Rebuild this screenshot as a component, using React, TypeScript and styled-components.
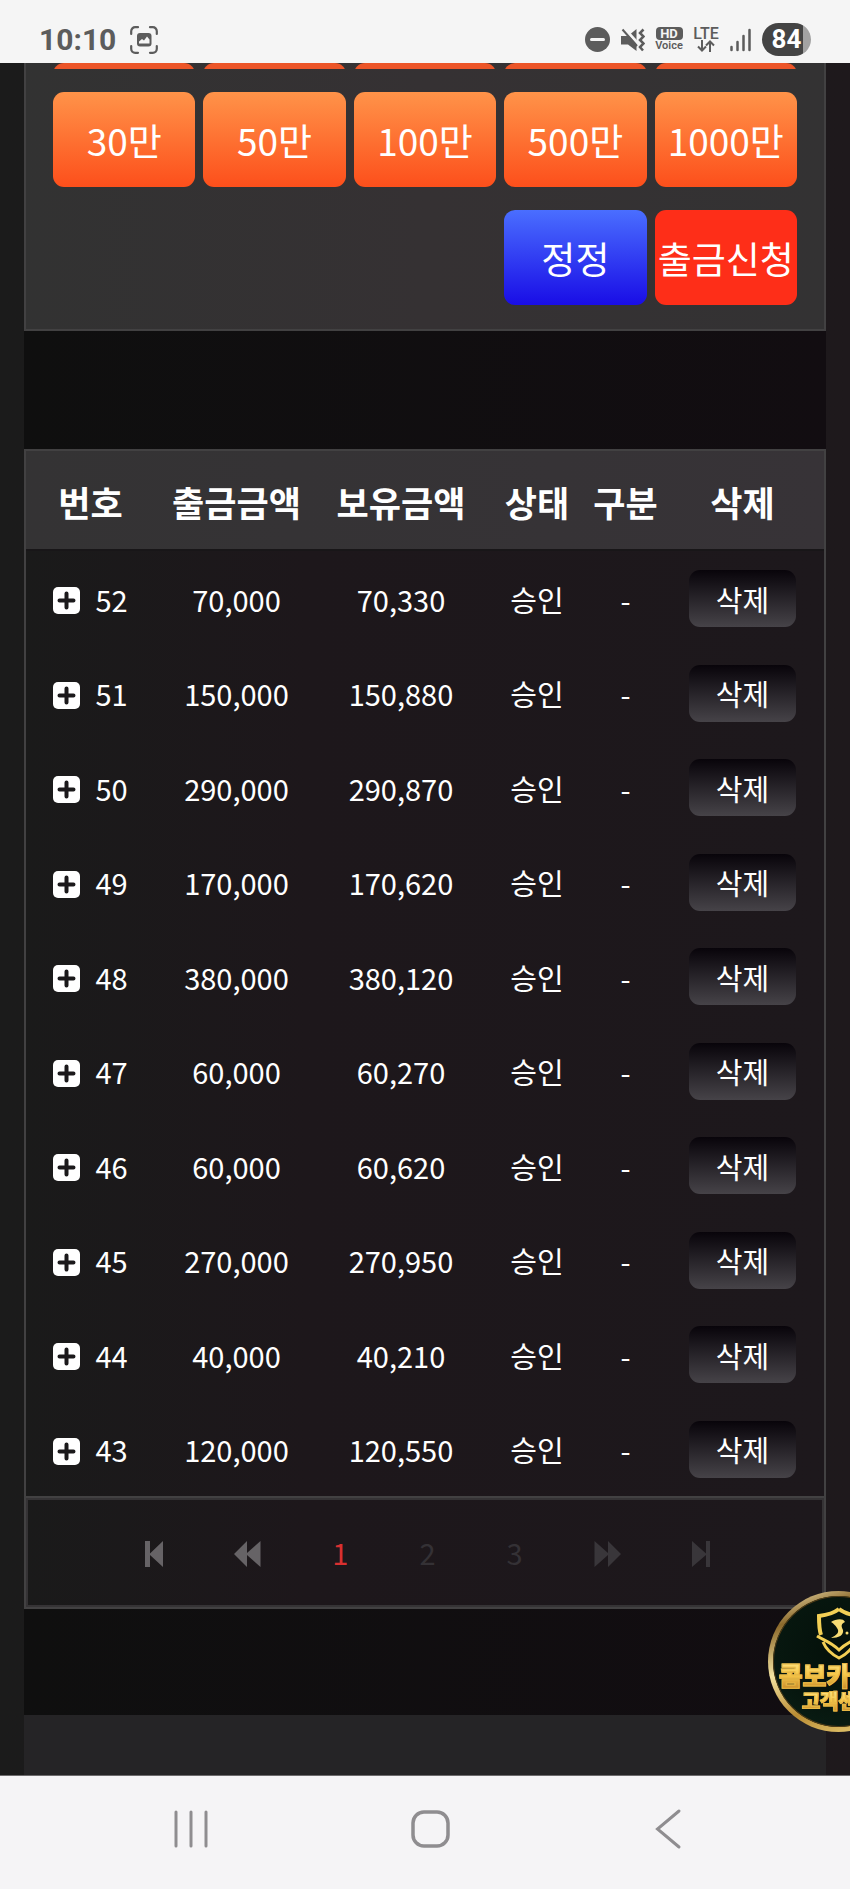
import styled, { createGlobalStyle } from 'styled-components';

const GlobalStyle = createGlobalStyle`
  * {
    box-sizing: border-box;
  }

  body {
    margin: 0;
    background-color: #f5f4f6;
    font-family: 'Noto Sans CJK KR', 'Noto Sans', sans-serif;
  }

  button {
    font-family: inherit;
    border: none;
    padding: 0;
    cursor: pointer;
  }
`;

const Screen = styled.div`
  display: flex;
  flex-direction: column;
  min-height: 100vh;
`;

const StatusBar = styled.header`
  display: flex;
  justify-content: space-between;
  align-items: center;
  height: 63px;
  padding: 16px 39px 0;
  background-color: #f5f5f5;
  color: #5c5c5c;
  font-family: Roboto, sans-serif;
`;

const StatusGroup = styled.div<{ $gap: number }>`
  display: flex;
  align-items: center;
  gap: ${({ $gap }) => $gap}px;
`;

const Clock = styled.time`
  font-size: 30px;
  line-height: 32px;
  font-weight: 700;
`;

const Stacked = styled.div`
  display: flex;
  flex-direction: column;
  align-items: center;
  width: 26px;
  font-size: 11px;
  line-height: 12px;
  font-weight: 600;
`;

const HdTag = styled.span`
  width: 27px;
  height: 13px;
  border-radius: 4px;
  background-color: #5c5c5c;
  color: #f5f5f5;
  font-size: 13px;
  line-height: 14px;
  font-weight: 700;
  text-align: center;
`;

const Lte = styled.span`
  font-size: 16px;
  line-height: 13px;
  font-weight: 500;
`;

const Battery = styled.div`
  width: 49px;
  height: 33px;
  border-radius: 17px;
  background: linear-gradient(90deg, #444 84%, #a3a3a3 84%);
  color: #fff;
  font-size: 26px;
  line-height: 33px;
  font-weight: 700;
  text-align: center;
`;

const Content = styled.main`
  position: relative;
  flex: 1;
  overflow: hidden;
  padding: 0 24px;
  background: linear-gradient(90deg, #1b1b1b, #1e191c);
  border-bottom: 1px solid #6c6a6c;
`;

const Inner = styled.div`
  background: linear-gradient(90deg, #0f0f0f, #120d11);
`;

const AmountPanel = styled.section`
  padding: 0 27px 24px;
  border: solid #424142;
  border-width: 0 2px 2px;
  background: linear-gradient(90deg, #323232, #353133 50%, #333233);
`;

const AmountRow = styled.div`
  display: grid;
  grid-template-columns: repeat(5, 1fr);
  gap: 8px;
  margin-bottom: 23px;

  &:last-child {
    margin-bottom: 0;
  }
`;

const ScrolledRow = styled(AmountRow)`
  height: 6px;
  align-items: end;
  overflow: hidden;
`;

const ButtonEdge = styled.div`
  height: 24px;
  border-radius: 11px;
  background-color: #ec5528;
`;

const fills = {
  orange: 'linear-gradient(#ff9349, #fd4f1b)',
  blue: 'linear-gradient(#4a6eff, #190de6)',
  red: '#fe2e18',
};

const AmountButton = styled.button<{ $fill?: keyof typeof fills }>`
  height: 95px;
  border-radius: 11px;
  background: ${({ $fill = 'orange' }) => fills[$fill]};
  color: #fff;
  font-size: 37px;
  line-height: 48px;
  white-space: nowrap;
`;

const ResetButton = styled(AmountButton)`
  grid-column: 4;
`;

const History = styled.section`
  margin-top: 118px;
  border: 2px solid #424142;
  background: linear-gradient(90deg, #1a1a1a, #1d171b 35%, #1d181c);
`;

const Table = styled.table`
  width: 100%;
  table-layout: fixed;
  border-collapse: separate;
  border-spacing: 0;
  color: #fff;
`;

const HeadRow = styled.tr`
  background: linear-gradient(90deg, #343334, #373337);
`;

const HeadCell = styled.th`
  height: 100px;
  padding: 3px 0 0;
  border-bottom: 2px solid #181618;
  font-size: 35px;
  line-height: 48px;
  font-weight: 700;
  white-space: nowrap;
`;

const Row = styled.tr`
  height: 95px;

  &:nth-child(even) {
    height: 94px;
  }
`;

const Cell = styled.td`
  padding: 0;
  font-size: 29px;
  line-height: 40px;
  text-align: center;
`;

const NumberCell = styled.div`
  display: flex;
  align-items: center;
  justify-content: center;
  gap: 15px;
`;

const ExpandButton = styled.button`
  display: block;
  width: 27px;
  height: 27px;
  margin-top: 4px;
  background: none;

  svg {
    display: block;
  }
`;

const DeleteButton = styled.button`
  display: block;
  width: 107px;
  height: 57px;
  margin: 0 auto;
  border-radius: 11px;
  background: linear-gradient(#08040a, #464348);
  color: #fff;
  font-size: 29px;
  line-height: 40px;
`;

const Pagination = styled.nav`
  display: flex;
  justify-content: center;
  align-items: center;
  gap: 71px;
  height: 111px;
  padding: 4px 0 0 5px;
  border-top: 2px solid #424142;
  box-shadow: inset 0 0 0 2px #353335;
`;

const PageButton = styled.button<{ $tone: string }>`
  display: flex;
  align-items: center;
  background: none;
  color: ${({ $tone }) => $tone};
`;

const PageNumber = styled(PageButton)`
  padding-bottom: 6px;
  font-size: 29px;
  line-height: 40px;
`;

const Spacer = styled.div`
  height: 106px;
`;

const Footer = styled.footer`
  height: 60px;
  background-color: #252426;
`;

const SupportBadge = styled.button`
  position: absolute;
  right: -59px;
  bottom: 43px;
  display: flex;
  flex-direction: column;
  align-items: center;
  width: 141px;
  height: 141px;
  padding-top: 10px;
  border: 5px solid transparent;
  border-radius: 50%;
  background:
    radial-gradient(circle at 50% 40%, #04100a, #07170f 60%, #0a2217) padding-box,
    linear-gradient(160deg, #fff3c4, #8c6a2c 20%, #f4e3a0 45%, #b98c33 70%, #f3dc86) border-box;
  box-shadow: inset 0 0 0 1px #4d3a16;
`;

const BadgeText = styled.span<{ $size: number; $line: number }>`
  background: linear-gradient(#ffe98a, #f6c648 50%, #c78a2a);
  background-clip: text;
  color: transparent;
  font-size: ${({ $size }) => $size}px;
  line-height: ${({ $line }) => $line}px;
  font-weight: 900;
  white-space: nowrap;
  -webkit-text-stroke: 1px #e9b945;
`;

const SystemNav = styled.nav`
  display: flex;
  justify-content: center;
  gap: 197px;
  height: 113px;
  padding: 32px 0 0 9px;
  background-color: #f5f4f6;
`;

const SystemButton = styled.button`
  width: 42px;
  height: 42px;
  background: none;
`;

const columns = [
  { label: '번호', width: 129 },
  { label: '출금금액', width: 163 },
  { label: '보유금액', width: 166 },
  { label: '상태', width: 106 },
  { label: '구분', width: 71 },
  { label: '삭제', width: 163 },
];

const rows = [
  { no: 52, amount: '70,000', balance: '70,330' },
  { no: 51, amount: '150,000', balance: '150,880' },
  { no: 50, amount: '290,000', balance: '290,870' },
  { no: 49, amount: '170,000', balance: '170,620' },
  { no: 48, amount: '380,000', balance: '380,120' },
  { no: 47, amount: '60,000', balance: '60,270' },
  { no: 46, amount: '60,000', balance: '60,620' },
  { no: 45, amount: '270,000', balance: '270,950' },
  { no: 44, amount: '40,000', balance: '40,210' },
  { no: 43, amount: '120,000', balance: '120,550' },
];

const amounts = ['30만', '50만', '100만', '500만', '1000만'];

function CaptureIcon() {
  return (
    <svg width="28" height="28" viewBox="0 0 28 28" fill="none" stroke="#5c5c5c" strokeWidth="2.2">
      <path d="M1.2 8V5.2a4 4 0 0 1 4-4H8M20 1.2h2.8a4 4 0 0 1 4 4V8M26.8 20v2.8a4 4 0 0 1-4 4H20M8 26.8H5.2a4 4 0 0 1-4-4V20" strokeLinecap="round" />
      <rect x="7" y="7" width="14.5" height="13.5" rx="3" fill="#5c5c5c" stroke="none" />
      <path d="M9 17.5v-2l3-2.500 2 1.500 3-4 2.500 3v4z" fill="#f5f5f5" stroke="none" />
    </svg>
  );
}

function DndIcon() {
  return (
    <svg width="25" height="25" viewBox="0 0 25 25">
      <circle cx="12.5" cy="12.5" r="12.5" fill="#5c5c5c" />
      <path d="M6.5 12.5h12" stroke="#f5f5f5" strokeWidth="3" strokeLinecap="round" />
    </svg>
  );
}

function MuteIcon() {
  return (
    <svg width="24" height="24" viewBox="0 0 24 24" fill="none">
      <path d="M0 8h7L15.500 1v22L7 16.500H0z" fill="#5c5c5c" />
      <path d="M3 0l14 15.500" stroke="#f5f5f5" strokeWidth="3" />
      <path d="M1.500 1.500L16 18" stroke="#5c5c5c" strokeWidth="2" />
      <path d="M22.500 1.500L19 5l3.500 3.500L19 12l3.500 3.500L19 19l3 3.500" stroke="#5c5c5c" strokeWidth="2.500" />
    </svg>
  );
}

function DataArrows() {
  return (
    <svg width="18" height="12" viewBox="0 0 18 12" fill="none" stroke="#5c5c5c" strokeWidth="2">
      <path d="M5 0v10.500M1 6.500l4 4 4-4M13 12V1.500M9 5.500l4-4 4 4" />
    </svg>
  );
}

function SignalIcon() {
  return (
    <svg width="21" height="24" viewBox="0 0 21 24" stroke="#5c5c5c" strokeWidth="2.5" strokeLinecap="round">
      <path d="M1.500 19v3M7.500 14v8M13.500 8v14M19.500 2v20" />
    </svg>
  );
}

function PlusBox() {
  return (
    <svg width="27" height="27" viewBox="0 0 27 27">
      <rect width="27" height="27" rx="5" fill="#fff" />
      <path d="M13.500 6.500v14M6.500 13.500h14" stroke="#1b191b" strokeWidth="4" strokeLinecap="round" />
    </svg>
  );
}

function SkipFirst() {
  return (
    <svg width="18" height="27" viewBox="0 0 18 27" fill="currentColor">
      <path d="M0 0h5v12.500L18 0v26L5 14v12H0z" />
    </svg>
  );
}

function Rewind() {
  return (
    <svg width="27" height="27" viewBox="0 0 27 27" fill="currentColor">
      <path d="M0 13L13 0v12L26.500 0v26L13 14v12z" />
    </svg>
  );
}

function Forward() {
  return (
    <svg width="27" height="27" viewBox="0 0 27 27" fill="currentColor">
      <path d="M27 13L14 0v12L.5 0v26L14 14v12z" />
    </svg>
  );
}

function SkipLast() {
  return (
    <svg width="18" height="27" viewBox="0 0 18 27" fill="currentColor">
      <path d="M18 0h-4v12.500L0 0v26l14-12v12h4z" />
    </svg>
  );
}

function ShieldIcon() {
  return (
    <svg width="46" height="54" viewBox="0 0 46 54" fill="none" stroke="#f3cf55" strokeWidth="4">
      <path d="M23 3C18 7 11 9 3 10c0 6 0 13 2 19M23 3c5 4 12 6 20 7 0 6 0 13-2 19" />
      <path d="M1 30c6 4 14 6 22 14 8-8 16-10 22-14M7 36c3 7 8 12 16 16 8-4 13-9 16-16" strokeWidth="3" />
      <path d="M15 16c5-3 12-4 14 0-4 2-4 4-2 8 1 5-4 8-12 8 6-3 9-6 6-10-2-3-3-4-6-6z" fill="#f7dc74" stroke="none" />
      <circle cx="31" cy="27" r="1.5" fill="#f7dc74" stroke="none" />
    </svg>
  );
}

export default function App() {
  return (
    <>
      <GlobalStyle />
      <Screen>
        <StatusBar>
          <StatusGroup $gap={14}>
            <Clock>10:10</Clock>
            <CaptureIcon />
          </StatusGroup>
          <StatusGroup $gap={11}>
            <DndIcon />
            <MuteIcon />
            <Stacked>
              <HdTag>HD</HdTag>
              <span>Voice</span>
            </Stacked>
            <Stacked>
              <Lte>LTE</Lte>
              <DataArrows />
            </Stacked>
            <SignalIcon />
            <Battery>84</Battery>
          </StatusGroup>
        </StatusBar>

        <Content>
          <Inner>
            <AmountPanel>
              <ScrolledRow aria-hidden="true">
                {amounts.map((amount) => (
                  <ButtonEdge key={amount} />
                ))}
              </ScrolledRow>
              <AmountRow>
                {amounts.map((amount) => (
                  <AmountButton key={amount} type="button">
                    {amount}
                  </AmountButton>
                ))}
              </AmountRow>
              <AmountRow>
                <ResetButton type="button" $fill="blue">
                  정정
                </ResetButton>
                <AmountButton type="submit" $fill="red">
                  출금신청
                </AmountButton>
              </AmountRow>
            </AmountPanel>

            <History>
              <Table>
                <colgroup>
                  {columns.map(({ label, width }) => (
                    <col key={label} width={width} />
                  ))}
                </colgroup>
                <thead>
                  <HeadRow>
                    {columns.map(({ label }) => (
                      <HeadCell key={label} scope="col">
                        {label}
                      </HeadCell>
                    ))}
                  </HeadRow>
                </thead>
                <tbody>
                  {rows.map(({ no, amount, balance }) => (
                    <Row key={no}>
                      <Cell>
                        <NumberCell>
                          <ExpandButton type="button" aria-label={`${no}`}>
                            <PlusBox />
                          </ExpandButton>
                          {no}
                        </NumberCell>
                      </Cell>
                      <Cell>{amount}</Cell>
                      <Cell>{balance}</Cell>
                      <Cell>승인</Cell>
                      <Cell>-</Cell>
                      <Cell>
                        <DeleteButton type="button">삭제</DeleteButton>
                      </Cell>
                    </Row>
                  ))}
                </tbody>
              </Table>
              <Pagination>
                <PageButton type="button" $tone="#666366" aria-label="First">
                  <SkipFirst />
                </PageButton>
                <PageButton type="button" $tone="#666366" aria-label="Previous">
                  <Rewind />
                </PageButton>
                <PageNumber type="button" $tone="#d93030" aria-current="page">
                  1
                </PageNumber>
                <PageNumber type="button" $tone="#343135">
                  2
                </PageNumber>
                <PageNumber type="button" $tone="#343135">
                  3
                </PageNumber>
                <PageButton type="button" $tone="#39363a" aria-label="Next">
                  <Forward />
                </PageButton>
                <PageButton type="button" $tone="#39363a" aria-label="Last">
                  <SkipLast />
                </PageButton>
              </Pagination>
            </History>
            <Spacer />
            <Footer />
          </Inner>
          <SupportBadge type="button">
            <ShieldIcon />
            <BadgeText $size={26} $line={30}>
              콤보카지노
            </BadgeText>
            <BadgeText $size={20} $line={22}>
              고객센터
            </BadgeText>
          </SupportBadge>
        </Content>

        <SystemNav>
          <SystemButton type="button" aria-label="Recents">
            <svg width="42" height="42" viewBox="0 0 42 42" stroke="#8f8d90" strokeWidth="3" strokeLinecap="round">
              <path d="M6 4v34M21 4v34M36 4v34" />
            </svg>
          </SystemButton>
          <SystemButton type="button" aria-label="Home">
            <svg width="42" height="42" viewBox="0 0 42 42" fill="none" stroke="#8f8d90" strokeWidth="3.5">
              <rect x="4" y="4" width="35" height="34" rx="11" />
            </svg>
          </SystemButton>
          <SystemButton type="button" aria-label="Back">
            <svg width="42" height="42" viewBox="0 0 42 42" fill="none" stroke="#8f8d90" strokeWidth="3" strokeLinecap="round">
              <path d="M31 3L9.500 21 31 39" />
            </svg>
          </SystemButton>
        </SystemNav>
      </Screen>
    </>
  );
}
